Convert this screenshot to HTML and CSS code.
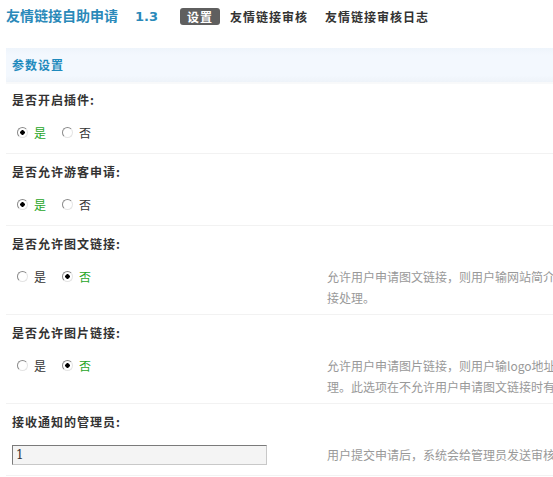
FILE: index.html
```html
<!DOCTYPE html>
<html lang="zh-CN">
<head>
<meta charset="utf-8">
<title>友情链接自助申请 1.3</title>
<link rel="stylesheet" href="styles.css">
</head>
<body>
<div class="page">
  <div class="topbar">
    <h3 class="title">友情链接自助申请<span class="ver">1.3</span></h3>
    <ul class="tabs">
      <li class="tab current">设置</li>
      <li class="tab">友情链接审核</li>
      <li class="tab">友情链接审核日志</li>
    </ul>
  </div>

  <div class="section-head">参数设置</div>

  <div class="block first">
    <div class="label">是否开启插件:</div>
    <div class="value">
      <div class="field">
        <label class="opt checked"><input type="radio" name="r1" checked>是</label>
        <label class="opt"><input type="radio" name="r1">否</label>
      </div>
      <div class="desc"></div>
    </div>
  </div>

  <div class="block">
    <div class="label">是否允许游客申请:</div>
    <div class="value">
      <div class="field">
        <label class="opt checked"><input type="radio" name="r2" checked>是</label>
        <label class="opt"><input type="radio" name="r2">否</label>
      </div>
      <div class="desc"></div>
    </div>
  </div>

  <div class="block">
    <div class="label">是否允许图文链接:</div>
    <div class="value">
      <div class="field">
        <label class="opt"><input type="radio" name="r3">是</label>
        <label class="opt checked"><input type="radio" name="r3" checked>否</label>
      </div>
      <div class="desc">允许用户申请图文链接，则用户输网站简介和logo地址，否则将作为文字链<br>接处理。</div>
    </div>
  </div>

  <div class="block">
    <div class="label">是否允许图片链接:</div>
    <div class="value">
      <div class="field">
        <label class="opt"><input type="radio" name="r4">是</label>
        <label class="opt checked"><input type="radio" name="r4" checked>否</label>
      </div>
      <div class="desc">允许用户申请图片链接，则用户输logo地址，否则将作为文字链接处<br>理。此选项在不允许用户申请图文链接时有效。</div>
    </div>
  </div>

  <div class="block">
    <div class="label">接收通知的管理员:</div>
    <div class="value">
      <div class="field">
        <input class="txt" type="text" value="1">
      </div>
      <div class="desc">用户提交申请后，系统会给管理员发送审核通知，多个管理员用逗号隔开。</div>
    </div>
  </div>
</div>
</body>
</html>
```
FILE: styles.css
```css
html, body {
  margin: 0;
  padding: 0;
  background: #fff;
  overflow: hidden;
}

body {
  font-family: "Noto Sans CJK SC", "Liberation Sans", sans-serif;
  font-size: 12px;
  color: #333;
}

.page {
  width: 900px;
  padding-left: 6px;
}

.topbar {
  display: flex;
  align-items: center;
  height: 32px;
  margin-bottom: 16px;
}

.title {
  margin: 0;
  font-size: 14px;
  font-weight: bold;
  color: #2a89b9;
  line-height: 18px;
  width: 174px;
  white-space: nowrap;
}

.ver {
  margin-left: 17px;
  font-family: "DejaVu Sans", sans-serif;
  font-size: 13px;
}

.tabs {
  display: flex;
  list-style: none;
  margin: 0;
  padding: 0;
}

.tab {
  padding: 0 7px;
  margin-right: 3px;
  line-height: 17px;
  font-weight: bold;
  letter-spacing: 1px;
  color: #333;
  border-radius: 3px;
  white-space: nowrap;
}

.tab.current {
  background: #5f5f5f;
  color: #fff;
}

.section-head {
  height: 34px;
  line-height: 34px;
  padding-left: 6px;
  background: linear-gradient(#eef4fb, #f3f8fe 20%, #f3f8fe 80%, #eef3f9);
  border-bottom: 2px solid #f8f9fa;
  font-weight: bold;
  color: #1f8abd;
  letter-spacing: 1px;
}

.block {
  padding: 0 6px;
  border-bottom: 1px solid #f2f2f2;
}

.label {
  padding-top: 9px;
  line-height: 18px;
  font-weight: bold;
  letter-spacing: 1px;
  color: #333;
}

.block.first .label {
  padding-top: 7px;
}

.value {
  display: grid;
  grid-template-columns: 315px 420px;
  margin-top: 13px;
  min-height: 31px;
  box-sizing: border-box;
  padding-bottom: 6px;
}

.field {
  display: flex;
  align-items: center;
  height: 21px;
}

.opt {
  display: inline-flex;
  align-items: center;
  margin-right: 11px;
  color: #333;
}

.opt.checked {
  color: #1fa51f;
}

.opt input {
  appearance: none;
  -webkit-appearance: none;
  width: 11px;
  height: 11px;
  margin: 0 6px 0 5px;
  border-radius: 50%;
  border: 1px solid;
  border-color: #8a8a8a #e4e4e4 #e4e4e4 #8a8a8a;
  background: #fff;
  box-sizing: border-box;
}

.opt input:checked {
  background: radial-gradient(circle, #000 0 2px, #fff 2.5px);
}

.txt {
  width: 255px;
  height: 20px;
  box-sizing: border-box;
  margin: 0;
  padding: 0 3px;
  border: 1px solid;
  border-color: #7a7a7a #c8c8c8 #c8c8c8 #7a7a7a;
  background: #f4f4f4;
  font-family: "DejaVu Serif", serif;
  font-size: 12px;
  color: #333;
}

.desc {
  line-height: 21px;
  color: #999;
  white-space: nowrap;
}
```
